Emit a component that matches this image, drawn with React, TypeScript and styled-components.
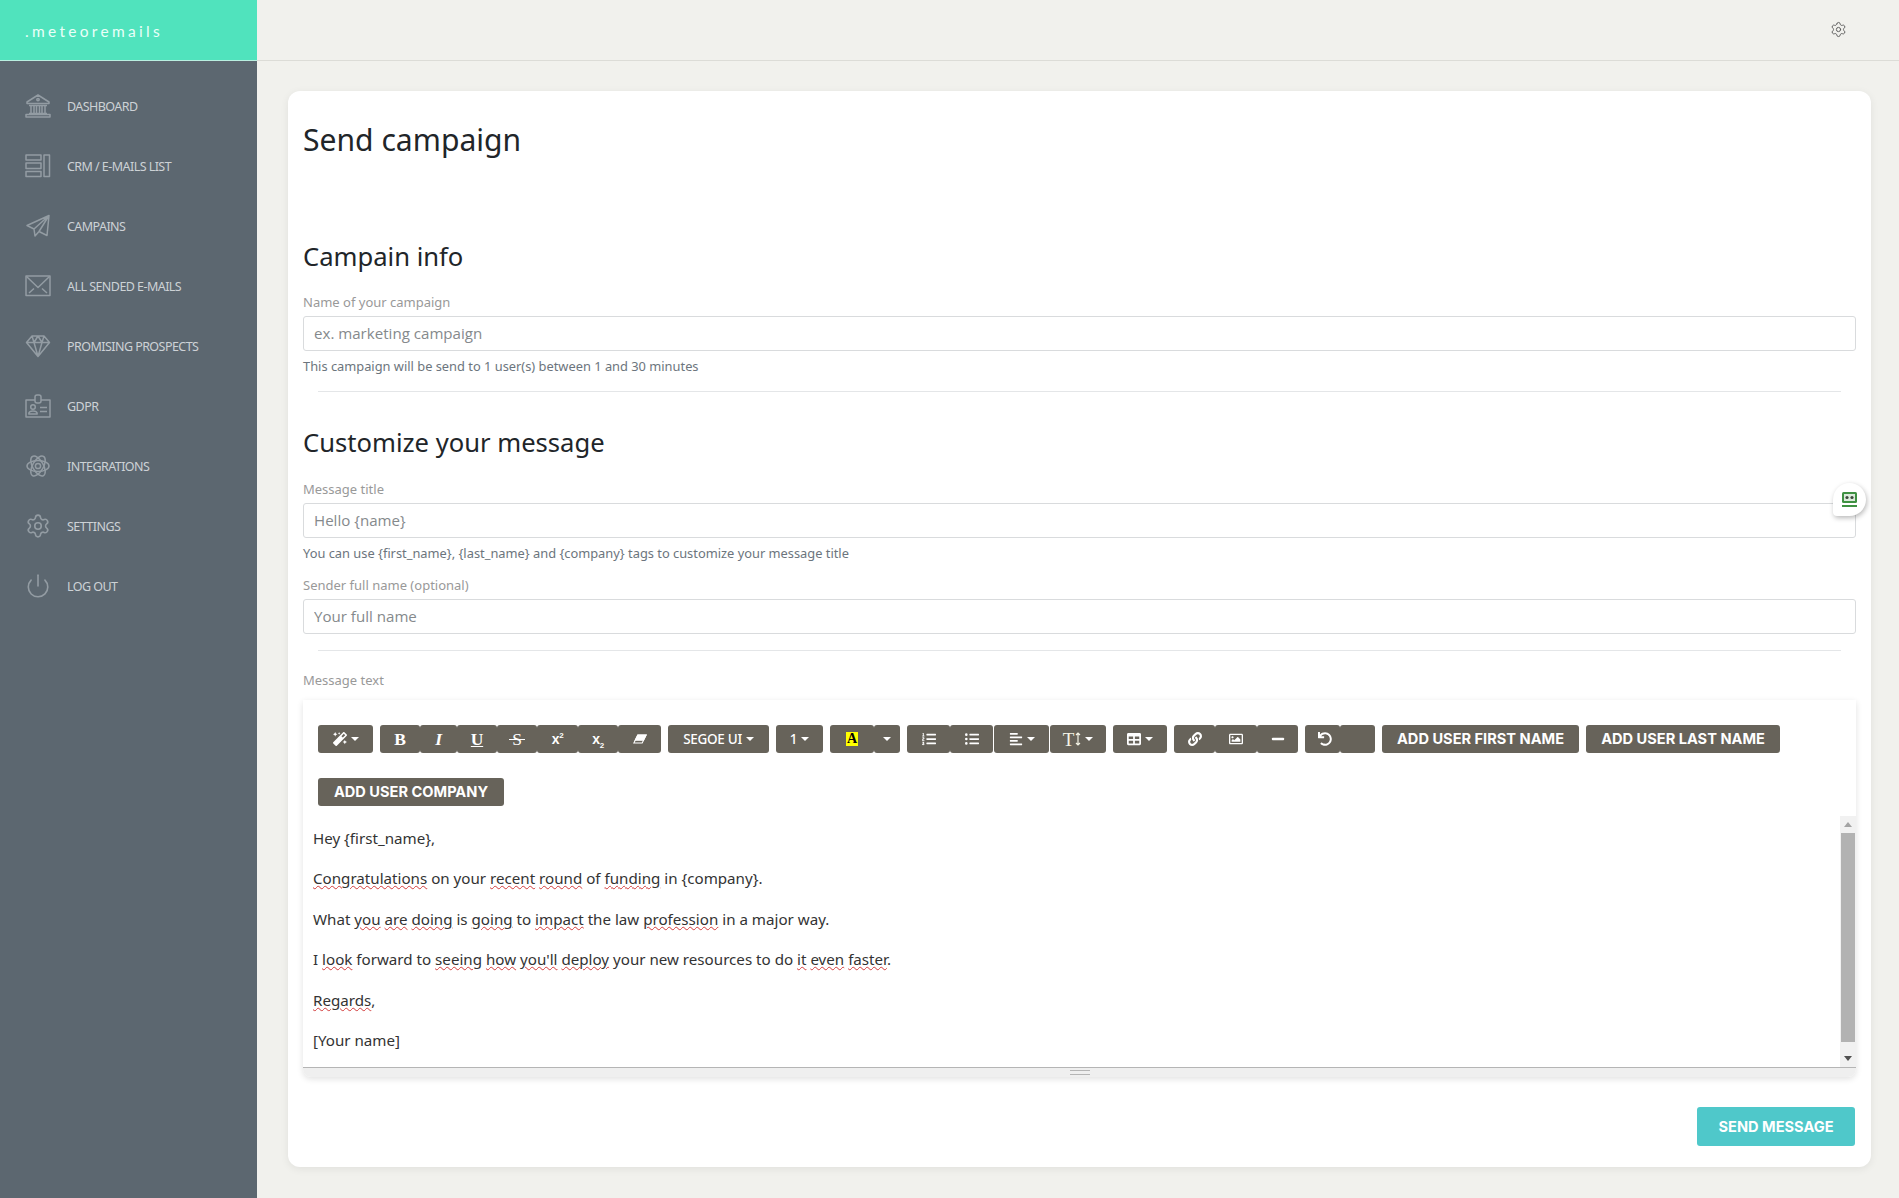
import React from "react";
import styled, { createGlobalStyle } from "styled-components";
import { Settings, Power } from "lucide-react";
import {
  FaMagic, FaListOl, FaListUl, FaAlignLeft, FaTable, FaLink, FaRegImage, FaMinus, FaUndo,
} from "react-icons/fa";

const Global = createGlobalStyle`
  html, body { margin: 0; padding: 0; background: #f1f1ed; }
  * { box-sizing: border-box; }
  body { font-family: "Noto Sans", "Open Sans", sans-serif; }
`;

const Page = styled.div`
  display: grid;
  grid-template-columns: 257px 1fr;
  min-height: 1198px;
`;
const Sidebar = styled.aside`
  background: #5c6770;
  display: flex;
  flex-direction: column;
`;
const Logo = styled.div`
  height: 61px;
  background: #50e3bd;
  border-bottom: 1px solid #b9efe0;
  display: flex;
  align-items: center;
  padding: 2px 0 0 25px;
  color: #eafff9;
  font: 400 15.5px "Lato", sans-serif;
  letter-spacing: 3.3px;
`;
const Nav = styled.nav`
  display: flex;
  flex-direction: column;
  padding-top: 15px;
`;
const NavItem = styled.a`
  height: 60px;
  display: flex;
  align-items: center;
  padding-left: 25px;
  gap: 16px;
  color: #cdd2d6;
  font-size: 12.5px;
  letter-spacing: -0.55px;
  svg { width: 26px; height: 26px; color: #939ca3; flex: none; }
`;
const Main = styled.main`
  display: flex;
  flex-direction: column;
`;
const Topbar = styled.header`
  height: 61px;
  border-bottom: 1px solid #dcdcd7;
  display: flex;
  align-items: center;
  justify-content: flex-end;
  padding: 0 52px 1px 0;
  color: #5f5f5f;
`;
const Content = styled.div`
  padding: 30px 28px 31px 31px;
`;
const Card = styled.section`
  background: #fff;
  border-radius: 12px;
  box-shadow: 0 2px 9px rgba(0, 0, 0, 0.07);
  padding: 25px 15px 21px;
  display: flex;
  flex-direction: column;
  color: #212529;
`;
const Title = styled.h1`
  margin: 0;
  font-weight: 400;
  font-size: 30.1px;
  line-height: 48px;
`;
const SectionTitle = styled.h2<{ $top: number }>`
  margin: ${(p) => p.$top}px 0 0;
  font-weight: 400;
  font-size: 25.6px;
  line-height: 36px;
`;
const Label = styled.label<{ $top: number }>`
  margin-top: ${(p) => p.$top}px;
  font-size: 13px;
  line-height: 18px;
  color: #999;
`;
const Input = styled.input`
  margin-top: 5px;
  height: 35px;
  width: 100%;
  border: 1px solid #d9dbdd;
  border-radius: 3px;
  padding: 0 10px 2px;
  font: 400 15.1px "Open Sans", sans-serif;
  background: #fff;
  &::placeholder { color: #85898c; opacity: 1; }
`;
const Help = styled.p`
  margin: 6px 0 0;
  font-size: 12.85px;
  line-height: 18px;
  color: #6c757d;
`;
const Divider = styled.hr`
  margin: 16px 15px 0;
  border: 0;
  border-top: 1px solid #e4e6e8;
  height: 0;
`;
const Editor = styled.div`
  margin-top: 11px;
  border-radius: 0 0 8px 8px;
  box-shadow: 0 2px 6px rgba(0, 0, 0, 0.12);
  display: flex;
  flex-direction: column;
  background: #fff;
`;
const Toolbar = styled.div`
  display: flex;
  flex-wrap: wrap;
  row-gap: 25px;
  column-gap: 7px;
  padding: 25px 15px 10px;
`;
const Group = styled.div`
  display: flex;
`;
const Tool = styled.button<{ $w: number }>`
  width: ${(p) => p.$w}px;
  height: 28px;
  border: 0;
  padding: 0;
  border-radius: 3px;
  background: #67635a;
  color: #fff;
  display: flex;
  align-items: center;
  justify-content: center;
  gap: 4px;
  font: 500 13.5px "Noto Sans", sans-serif;
  letter-spacing: -0.3px;
  svg { width: 14px; height: 14px; }
`;
const ToolGap = styled.span`
  width: 1px;
`;
const TextTool = styled(Tool)`
  font: 700 14.6px "Inter", sans-serif;
  letter-spacing: 0;
`;
const Caret = styled.i`
  width: 0;
  height: 0;
  border-left: 4px solid transparent;
  border-right: 4px solid transparent;
  border-top: 4px solid #fff;
`;
const Serif = styled.span<{ $i?: boolean; $u?: boolean }>`
  font: ${(p) => (p.$i ? "italic 700" : "700")} 17.5px "Liberation Serif", serif;
  text-decoration: ${(p) => (p.$u ? "underline" : "none")};
`;
const Struck = styled.span`
  position: relative;
  font: 400 17.5px "Liberation Serif", serif;
  &::after {
    content: "";
    position: absolute;
    left: -3px;
    right: -3px;
    top: 10px;
    height: 1px;
    background: #fff;
  }
`;
const Script = styled.span`
  font: 700 14px "Liberation Sans", sans-serif;
  sup, sub { font-size: 8px; line-height: 0; }
`;
const Highlight = styled.span`
  background: #ffff00;
  color: #000;
  width: 12px;
  height: 14px;
  font: 700 14px/14px "Liberation Serif", serif;
  text-align: center;
`;
const TextSizeT = styled.span`
  font: 400 19px/1 "Liberation Serif", serif;
  color: #f4f4e6;
  margin-right: -3px;
`;
const UndoTool = styled(Tool)`
  padding-left: 5px;
`;
const Body = styled.div`
  display: flex;
  height: 251px;
`;
const Editable = styled.div`
  flex: 1;
  padding: 10px 10px 0;
`;
const Para = styled.p`
  margin: 0 0 16.4px;
  font-size: 15.15px;
  line-height: 24px;
  color: #333;
`;
const Miss = styled.span`
  text-decoration: underline wavy #d23b3b;
  text-decoration-thickness: 1px;
  text-underline-offset: 1px;
`;
const Scroll = styled.div`
  width: 16px;
  background: #f1f1f1;
  display: flex;
  flex-direction: column;
  align-items: center;
`;
const ScrollArrow = styled.i<{ $up?: boolean }>`
  flex: none;
  width: 0;
  height: 0;
  margin: ${(p) => (p.$up ? "6px 0" : "auto 0 6px")};
  border-left: 4px solid transparent;
  border-right: 4px solid transparent;
  ${(p) => (p.$up ? "border-bottom: 5px solid #a3a3a3;" : "border-top: 5px solid #505050;")}
`;
const ScrollThumb = styled.div`
  width: 14px;
  height: 209px;
  background: #b2b2b2;
`;
const Status = styled.div`
  height: 10px;
  background: #efefef;
  border-top: 1px solid #b5b5b5;
  border-radius: 0 0 8px 8px;
  display: flex;
  align-items: center;
  justify-content: center;
`;
const Grip = styled.i`
  width: 20px;
  height: 5px;
  border-top: 1px solid #b5b5b5;
  border-bottom: 1px solid #b5b5b5;
`;
const Footer = styled.div`
  margin-top: 30px;
  display: flex;
  justify-content: flex-end;
`;
const Send = styled.button`
  width: 158px;
  height: 39px;
  margin-right: 1px;
  border: 0;
  border-radius: 3px;
  background: #4fc8ca;
  color: #fff;
  font: 700 14.6px "Inter", sans-serif;
`;
const InputWrap = styled.div`
  position: relative;
`;
const Robo = styled.div`
  position: absolute;
  top: -15px;
  right: -10px;
  width: 33px;
  height: 33px;
  border-radius: 50% 50% 50% 4px;
  background: #fff;
  box-shadow: 1px 2px 5px rgba(0, 0, 0, 0.28);
  display: flex;
  align-items: center;
  justify-content: center;
`;

const IconSvg: React.FC<{ children: React.ReactNode }> = ({ children }) => (
  <svg viewBox="0 0 26 24" fill="none" stroke="currentColor" strokeWidth="1.5" strokeLinejoin="round">
    {children}
  </svg>
);

const EraserIcon = () => (
  <svg viewBox="0 0 16 14" fill="none" stroke="#fff" strokeWidth="1.2">
    <path d="M5.5 2.5H15L10.5 11.5H1z" />
    <path d="M5.5 2.5H15L12 8.5H2.5z" fill="#fff" />
  </svg>
);

const HeightArrow = () => (
  <svg viewBox="0 0 6 14" fill="none" stroke="#f4f4e6" strokeWidth="1.2" style={{ width: 6 }}>
    <path d="M3 1v12M1 3l2-2 2 2M1 11l2 2 2-2" />
  </svg>
);

const navItems: [string, React.ReactNode][] = [
  ["DASHBOARD", <IconSvg><path d="M2 8 13 1l11 7v1.5H2z" /><circle cx="13" cy="5.6" r="1.2" /><path d="M4 11.5h18M6 11.5V19M9 11.5V19M11.5 11.5V19M14.5 11.5V19M17 11.5V19M20 11.5V19M4 19.5h18" /><rect x="1" y="20.5" width="24" height="2.5" /></IconSvg>],
  ["CRM / E-MAILS LIST", <IconSvg><rect x="1" y="1" width="15" height="5" /><rect x="1" y="9" width="15" height="5.5" /><rect x="1" y="17.5" width="15" height="5" /><rect x="19" y="1" width="5.5" height="21.5" /></IconSvg>],
  ["CAMPAINS", <IconSvg><path d="M24 1.5 2 11.5l7 3.5 1 7 4-4.5 8 4zM24 1.5 9 15M14 17.5 24 1.5" /></IconSvg>],
  ["ALL SENDED E-MAILS", <IconSvg><rect x="1" y="2" width="24" height="19.5" /><path d="m1.5 2.5 11.5 11 11.5-11M4 19l5-4.5M22 19l-5-4.5" /></IconSvg>],
  ["PROMISING PROSPECTS", <IconSvg><path d="M7 2h12l5.5 6.5L13 22.5 1.5 8.5zM1.5 8.5h23M9 8.5l4 14 4-14M7 2l2 6.5L13 2l4 6.5L19 2" /></IconSvg>],
  ["GDPR", <IconSvg><rect x="1" y="6" width="24" height="17" /><rect x="10" y="1" width="6" height="8" rx="2" fill="#5c6770" /><circle cx="8" cy="13" r="2.3" /><path d="M3.8 20c0-4 8.4-4 8.4 0zM15 13.5h7M15 17.5h7" /></IconSvg>],
  ["INTEGRATIONS", <IconSvg><circle cx="13" cy="12" r="2.6" /><ellipse cx="13" cy="12" rx="11" ry="5.4" /><ellipse cx="13" cy="12" rx="11" ry="5.4" transform="rotate(60 13 12)" /><ellipse cx="13" cy="12" rx="11" ry="5.4" transform="rotate(120 13 12)" /></IconSvg>],
  ["SETTINGS", <Settings strokeWidth={1.5} />],
  ["LOG OUT", <Power strokeWidth={1.5} />],
];

const paragraphs: (string | [string])[][] = [
  ["Hey {first_name},"],
  [["Congratulations"], " on your ", ["recent"], " ", ["round"], " of ", ["funding"], " in {company}."],
  ["What ", ["you"], " ", ["are"], " ", ["doing"], " is ", ["going"], " to ", ["impact"], " the law ", ["profession"], " in a major way."],
  ["I ", ["look"], " forward to ", ["seeing"], " ", ["how"], " ", ["you'll"], " ", ["deploy"], " your new resources to do ", ["it"], " ", ["even"], " ", ["faster"], "."],
  [["Regards"], ","],
  ["[Your name]"],
];

export default function App() {
  return (
    <Page>
      <Global />
      <Sidebar>
        <Logo>.meteoremails</Logo>
        <Nav>
          {navItems.map(([label, icon]) => (
            <NavItem key={label}>
              {icon}
              {label}
            </NavItem>
          ))}
        </Nav>
      </Sidebar>
      <Main>
        <Topbar>
          <Settings size={17} strokeWidth={1.4} />
        </Topbar>
        <Content>
          <Card>
            <Title>Send campaign</Title>
            <SectionTitle $top={75}>Campain info</SectionTitle>
            <Label $top={18}>Name of your campaign</Label>
            <Input placeholder="ex. marketing campaign" />
            <Help>This campaign will be send to 1 user(s) between 1 and 30 minutes</Help>
            <Divider />
            <SectionTitle $top={33}>Customize your message</SectionTitle>
            <Label $top={19}>Message title</Label>
            <InputWrap>
              <Input placeholder="Hello {name}" />
              <Robo>
                <svg width="17" height="17" viewBox="0 0 17 17">
                  <rect x="1" y="1" width="15" height="11" rx="1.5" fill="#3f9142" />
                  <rect x="3" y="3" width="11" height="7" fill="#dcebdc" />
                  <circle cx="6" cy="6.5" r="1.6" fill="#3b4a3b" />
                  <circle cx="11" cy="6.5" r="1.6" fill="#3b4a3b" />
                  <rect x="1" y="14" width="15" height="2" fill="#3f9142" />
                </svg>
              </Robo>
            </InputWrap>
            <Help>You can use {"{first_name}"}, {"{last_name}"} and {"{company}"} tags to customize your message title</Help>
            <Label $top={14}>Sender full name (optional)</Label>
            <Input placeholder="Your full name" />
            <Divider />
            <Label $top={20}>Message text</Label>
            <Editor>
              <Toolbar>
                <Group><Tool $w={55}><FaMagic /><Caret /></Tool></Group>
                <Group>
                  <Tool $w={40}><Serif>B</Serif></Tool>
                  <Tool $w={37}><Serif $i>I</Serif></Tool>
                  <Tool $w={40}><Serif $u>U</Serif></Tool>
                  <Tool $w={40}><Struck>S</Struck></Tool>
                  <Tool $w={41}><Script>x<sup>2</sup></Script></Tool>
                  <Tool $w={40}><Script>x<sub>2</sub></Script></Tool>
                  <Tool $w={43}><EraserIcon /></Tool>
                </Group>
                <Group><Tool $w={101}>SEGOE UI<Caret /></Tool></Group>
                <Group><Tool $w={47}>1<Caret /></Tool></Group>
                <Group>
                  <Tool $w={44}><Highlight>A</Highlight></Tool>
                  <Tool $w={26}><Caret /></Tool>
                </Group>
                <Group>
                  <Tool $w={43}><FaListOl /></Tool>
                  <Tool $w={43}><FaListUl /></Tool>
                  <ToolGap />
                  <Tool $w={55}><FaAlignLeft /><Caret /></Tool>
                  <ToolGap />
                  <Tool $w={56}><TextSizeT>T</TextSizeT><HeightArrow /><Caret /></Tool>
                </Group>
                <Group><Tool $w={54}><FaTable /><Caret /></Tool></Group>
                <Group>
                  <Tool $w={41}><FaLink /></Tool>
                  <Tool $w={42}><FaRegImage /></Tool>
                  <Tool $w={41}><FaMinus /></Tool>
                </Group>
                <Group>
                  <UndoTool $w={35}><FaUndo /></UndoTool>
                  <Tool $w={35} />
                </Group>
                <TextTool $w={197}>ADD USER FIRST NAME</TextTool>
                <TextTool $w={194}>ADD USER LAST NAME</TextTool>
                <TextTool $w={186}>ADD USER COMPANY</TextTool>
              </Toolbar>
              <Body>
                <Editable>
                  {paragraphs.map((p, i) => (
                    <Para key={i}>
                      {p.map((part, j) =>
                        typeof part === "string" ? part : <Miss key={j}>{part[0]}</Miss>
                      )}
                    </Para>
                  ))}
                </Editable>
                <Scroll>
                  <ScrollArrow $up />
                  <ScrollThumb />
                  <ScrollArrow />
                </Scroll>
              </Body>
              <Status><Grip /></Status>
            </Editor>
            <Footer>
              <Send>SEND MESSAGE</Send>
            </Footer>
          </Card>
        </Content>
      </Main>
    </Page>
  );
}
